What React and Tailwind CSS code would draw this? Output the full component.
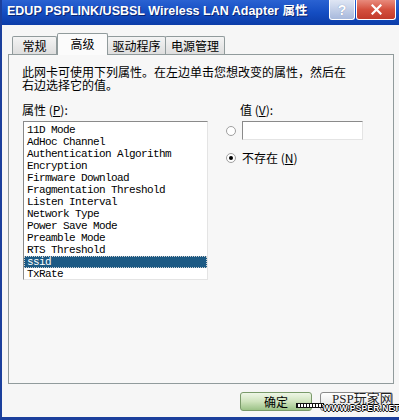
import React from "react";

const PROPS = [
  "11D Mode",
  "AdHoc Channel",
  "Authentication Algorithm",
  "Encryption",
  "Firmware Download",
  "Fragmentation Threshold",
  "Listen Interval",
  "Network Type",
  "Power Save Mode",
  "Preamble Mode",
  "RTS Threshold",
  "ssid",
  "TxRate",
];

const TABS = [
  { label: "常规", w: "w-[45px]" },
  { label: "高级", w: "w-[51px]", active: true },
  { label: "驱动程序", w: "w-[59px]" },
  { label: "电源管理", w: "w-[60px]" },
];

function Radio({ checked }) {
  return (
    <span className="w-[10px] h-[10px] rounded-full border border-[#a0a0a0] bg-white flex items-center justify-center shrink-0">
      {checked && <span className="w-[4px] h-[4px] rounded-full bg-black" />}
    </span>
  );
}

function TitleBar() {
  return (
    <div className="h-[25px] flex items-center justify-between bg-linear-to-b from-[#2a62d2] via-[#144dc2] to-[#0b3ca8] pl-[5px] pr-[8px]">
      <span className="text-white font-bold text-[12.5px] leading-none whitespace-nowrap font-['Liberation_Sans','Noto_Sans_CJK_SC',sans-serif] [text-shadow:1px_1px_#0a2470] -mt-[3px]">
        EDUP PSPLINK/USBSL Wireless LAN Adapter 属性
      </span>
      <div className="flex gap-[1px] self-start">
        <div className="w-[26px] h-[20px] rounded-b-[3px] border border-t-0 border-white bg-linear-to-b from-[#dfe6f4] to-[#a8b9dc] flex items-center justify-center text-white font-bold text-[14px] leading-none font-['Liberation_Sans',sans-serif] [text-shadow:0_0_1px_#6a7fae]">
          ?
        </div>
        <div className="w-[40px] h-[20px] rounded-b-[3px] border border-t-0 border-white bg-linear-to-b from-[#e88a7c] via-[#d4503e] to-[#c23a2a] flex items-center justify-center">
          <svg width="11" height="11" viewBox="0 0 11 11">
            <path d="M1.5 1.5 L9.5 9.5 M9.5 1.5 L1.5 9.5" stroke="white" strokeWidth="2.2" strokeLinecap="square" />
          </svg>
        </div>
      </div>
    </div>
  );
}

export default function App() {
  return (
    <div className="relative w-[399px] h-[420px] overflow-hidden bg-[#f6f6f6] text-black font-['Noto_Sans_CJK_SC','Liberation_Sans',sans-serif]">
      <div className="w-[404px] h-[420px] flex flex-col border-l-2 border-b-[3px] border-[#1b3f9c]">
        <TitleBar />
        <div className="flex-1 flex flex-col pl-[6px] pt-[8px]">
          {/* tabs */}
          <div className="flex items-end pl-[4px] h-[21px] relative z-10">
            {TABS.map((t) =>
              t.active ? (
                <div
                  key={t.label}
                  className={`${t.w} h-[22px] -mb-px bg-[#fbfbfb] border border-b-0 border-[#919b9c] rounded-t-[2px] flex items-center justify-center text-[12px] leading-none pb-[2px]`}
                >
                  {t.label}
                </div>
              ) : (
                <div
                  key={t.label}
                  className={`${t.w} h-[18px] bg-linear-to-b from-[#f4f4f4] to-[#dedede] border border-b-0 border-[#919b9c] rounded-t-[2px] -ml-px first:ml-0 flex items-center justify-center text-[12px] leading-none`}
                >
                  {t.label}
                </div>
              )
            )}
          </div>
          {/* panel */}
          <div className="w-[386px] h-[330px] border border-[#919b9c] bg-[#f7f7f7] pl-[13px] pt-[11px] text-[12px]">
            <div className="h-[13px] leading-[12px] whitespace-nowrap">
              此网卡可使用下列属性。在左边单击您想改变的属性，然后在
            </div>
            <div className="h-[13px] leading-[12px] whitespace-nowrap">右边选择它的值。</div>
            <div className="flex mt-[12px]">
              <div className="w-[186px] flex flex-col">
                <div className="leading-[12px] h-[12px]">
                  属性 (<span className="underline">P</span>):
                </div>
                <div className="mt-[5px] ml-px w-[185px] h-[159px] border border-t-[#8a8a8a] border-l-[#8a8a8a] border-b-[#e4e4e4] border-r-[#e4e4e4] bg-white pt-[2px] font-['Liberation_Mono',monospace] text-[11px] tracking-[-0.6px]">
                  {PROPS.map((p) => (
                    <div
                      key={p}
                      className={
                        p === "ssid"
                          ? "h-[12px] leading-[12px] pl-[3px] bg-[#1d5a84] text-white outline outline-1 outline-dotted outline-[#d0d0d0] -outline-offset-1"
                          : "h-[12px] leading-[12px] pl-[3px]"
                      }
                    >
                      {p}
                    </div>
                  ))}
                </div>
              </div>
              <div className="ml-[18px] flex flex-col">
                <div className="ml-[14px] leading-[12px] h-[12px]">
                  值 (<span className="underline">V</span>):
                </div>
                <div className="mt-[5px] flex items-center">
                  <Radio />
                  <div className="ml-[6px] w-[121px] h-[19px] bg-white border border-t-[#8a8a8a] border-l-[#8a8a8a] border-b-[#e4e4e4] border-r-[#e4e4e4]" />
                </div>
                <div className="mt-[12px] flex items-center">
                  <Radio checked />
                  <span className="ml-[6px] leading-[12px]">
                    不存在 (<span className="underline">N</span>)
                  </span>
                </div>
              </div>
            </div>
          </div>
          {/* buttons */}
          <div className="flex mt-[8px] pl-[232px] gap-[8px]">
            <div className="w-[72px] h-[19px] rounded-[3px] border border-[#7a9a6a] bg-linear-to-b from-[#eef6e6] via-[#cfe3bd] to-[#9cc287] flex items-center justify-center text-[12px] leading-none">
              确定
            </div>
            <div className="w-[73px] h-[19px] rounded-[3px] border border-[#8a8a8a] bg-linear-to-b from-[#ffffff] to-[#dcdcdc]" />
          </div>
        </div>
      </div>
      {/* watermark */}
      <div className="absolute left-[296px] top-[392px] w-[103px] h-[22px] pointer-events-none">
        <div className="absolute left-[36px] top-0 whitespace-nowrap text-[13px] leading-none font-['Liberation_Serif','Noto_Sans_CJK_SC',serif] text-[#222] [text-shadow:0_0_1px_white,0_0_1px_white]">
          PSP玩家网
        </div>
        <div className="absolute left-0 top-[11px] w-[28px] h-[5px] bg-[repeating-linear-gradient(90deg,#111_0,#111_1px,#fff_1px,#fff_3px)] border border-[#111]" />
        <div className="absolute left-[27px] top-[12px] whitespace-nowrap text-[8.5px] leading-none font-bold font-['Liberation_Sans',sans-serif] text-white tracking-[0.2px] [text-shadow:1px_0_#000,-1px_0_#000,0_1px_#000,0_-1px_#000]">
          WWW.PSPER.NET
        </div>
      </div>
    </div>
  );
}
